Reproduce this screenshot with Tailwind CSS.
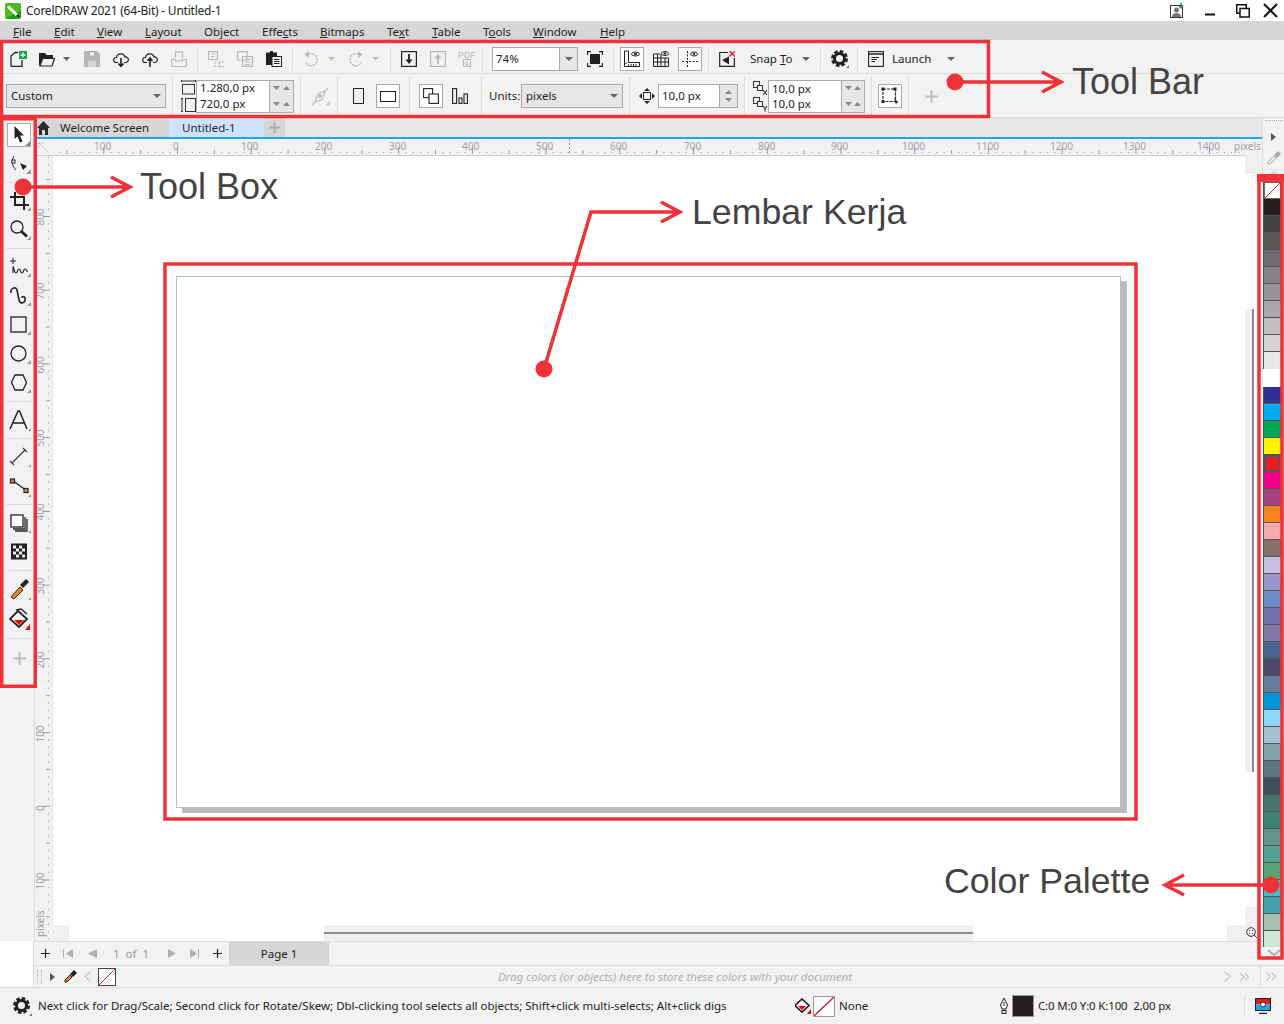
<!DOCTYPE html>
<html lang="en">
<head>
<meta charset="UTF-8">
<title>CorelDRAW 2021</title>
<script src="https://cdn.jsdelivr.net/npm/@tailwindcss/browser@4"></script>
</head>
<body class="relative w-[1284px] h-[1024px] overflow-hidden bg-white font-['Noto_Sans',sans-serif] text-[11.5px] leading-none text-[#222]">

<!-- Title bar -->
<div class="flex items-center h-[21px] pl-[5px] bg-white">
  <svg width="16" height="16" viewBox="0 0 16 16"><rect width="16" height="16" rx="2.5" fill="#19a01a"/><path d="M0 0H16V7L0 16Z" fill="#7fd02c" opacity=".55"/><path d="M3 3.5L12 12" stroke="#fff" stroke-width="3"/><path d="M12 12L14 14" stroke="#111" stroke-width="1.5"/></svg>
  <span class="ml-[5px] text-[12px] tracking-[-0.23px]">CorelDRAW 2021 (64-Bit) - Untitled-1</span>
  <div class="ml-auto flex items-center pr-[6px]">
    <svg width="16" height="16" viewBox="0 0 16 16" fill="none" stroke="#333"><rect x="1.5" y="2.5" width="12" height="12"/><circle cx="7.500" cy="7" r="2.500" fill="#777" stroke="none"/><path d="M3 14c0-3 2-4 4.500-4s4.500 1 4.500 4" fill="#777" stroke="none"/><path d="M12 0v5M10 3l2 2 2-2" stroke="#2a9d2a" stroke-width="1.500"/></svg>
    <svg class="ml-[20px]" width="10" height="10" viewBox="0 0 10 10"><path d="M0 8.500H10" stroke="#111" stroke-width="2"/></svg>
    <svg class="ml-[21px]" width="14" height="14" viewBox="0 0 14 14" fill="#fff" stroke="#111" stroke-width="1.500"><rect x=".75" y=".75" width="9.500" height="8.500"/><rect x="4" y="4.500" width="9.250" height="8.500"/></svg>
    <svg class="ml-[13px]" width="15" height="15" viewBox="0 0 15 15"><path d="M1 1L14 14M14 1L1 14" stroke="#111" stroke-width="2"/></svg>
  </div>
</div>

<!-- Menu bar -->
<div class="flex items-center h-[19px] pl-[13px] bg-[#d6d6d6] pt-[3px]">
  <span class="w-[41px]"><u>F</u>ile</span><span class="w-[43px]"><u>E</u>dit</span><span class="w-[48px]"><u>V</u>iew</span><span class="w-[59px]"><u>L</u>ayout</span><span class="w-[58px]">Ob<u>j</u>ect</span><span class="w-[58px]">Effe<u>c</u>ts</span><span class="w-[67px]"><u>B</u>itmaps</span><span class="w-[45px]">Te<u>x</u>t</span><span class="w-[51px]"><u>T</u>able</span><span class="w-[50px]">T<u>o</u>ols</span><span class="w-[67px]"><u>W</u>indow</span><span><u>H</u>elp</span>
</div>

<!-- Toolbar row 1 -->
<div class="flex items-center h-[34px] pt-[4px] bg-[#f2f2f2] border-b border-[#dcdcdc]">
  <svg class="ml-[10px]" width="17" height="16" viewBox="0 0 17 16" fill="none" stroke="#222" stroke-width="1.300"><path d="M1 15.500V5L5 1.500H8M12 9V15.500H1"/><rect x="9" y="0" width="8" height="8" fill="#12a24b" stroke="none"/><path d="M13 1.500V6.500M10.500 4H15.500" stroke="#fff"/></svg>
  <svg class="ml-[12px]" width="16" height="16" viewBox="0 0 16 16" fill="#222"><path d="M0 2H6L7.500 4H14V7H3.500L1.500 14H0Z"/><path d="M3.800 7.500H15.500L13 15H.8Z" fill="#f2f2f2" stroke="#222" stroke-width="1.200"/></svg>
  <svg class="ml-[8px]" width="7" height="4" viewBox="0 0 7 4"><path d="M0 0H7L3.500 4Z" fill="#666"/></svg>
  <svg class="ml-[14px]" width="16" height="16" viewBox="0 0 16 16"><path d="M0 0H13L16 3V16H0Z" fill="#b4b4b4"/><rect x="6" y="1.500" width="4" height="3" fill="#f2f2f2"/><rect x="4" y="10" width="8" height="6" fill="#d4d4d4"/></svg>
  <svg class="ml-[13px]" width="16" height="16" viewBox="0 0 16 16" fill="none" stroke="#222" stroke-width="1.200"><path d="M5 11.500H3.500C-.5 11.500 0 6.500 3.500 6.500 4 2 11 1.500 12 6 16 5.500 17 11.500 12 11.500H11"/><path d="M8 7V15M5.500 12.500L8 15.500 10.500 12.500" stroke-width="1.600"/></svg>
  <svg class="ml-[13px]" width="16" height="16" viewBox="0 0 16 16" fill="none" stroke="#222" stroke-width="1.200"><path d="M5 11.500H3.500C-.5 11.500 0 6.500 3.500 6.500 4 2 11 1.500 12 6 16 5.500 17 11.500 12 11.500H11"/><path d="M8 16V7.500M5.500 10L8 7 10.500 10" stroke-width="1.600"/></svg>
  <svg class="ml-[13px]" width="16" height="16" viewBox="0 0 16 16" fill="none" stroke="#b8b8b8" stroke-width="1.200"><path d="M4.500 7V.8H11.500V7M.6 15.500V8.500H4.500V10H11.500V8.500H15.400V15.500Z"/></svg>
  <div class="ml-[10px] w-px h-[24px] bg-[#dcdcdc]"></div>
  <svg class="ml-[10px]" width="16" height="16" viewBox="0 0 16 16" fill="none" stroke="#b8b8b8" stroke-width="1.200"><path d="M.6 .6H9.500V8.500H.6ZM3 3H7M3 5.500H7"/><path d="M11 11H16M11 15.500H16M11 11V15.500M7 11V15.500H9" stroke-dasharray="2 1"/></svg>
  <svg class="ml-[13px]" width="16" height="16" viewBox="0 0 16 16" fill="none" stroke="#b8b8b8" stroke-width="1.200"><path d="M.6 .6H10V9H.6ZM5.600 5.500H15.400V15.400H5.600ZM8 8.500H13M8 11H13M8 13.500H13"/></svg>
  <svg class="ml-[13px]" width="16" height="16" viewBox="0 0 16 16"><path d="M0 1.500H4V0H7V1.500H11V14H0Z" fill="#222"/><rect x="6" y="5.500" width="9.500" height="10" fill="#f2f2f2" stroke="#222"/><path d="M8 8.500H13.500M8 10.500H13.500M8 12.500H13.500" stroke="#222"/></svg>
  <div class="ml-[10px] w-px h-[24px] bg-[#dcdcdc]"></div>
  <svg class="ml-[10px]" width="16" height="16" viewBox="0 0 16 16" fill="none" stroke="#bcbcbc" stroke-width="1.400"><path d="M5 3.500A6 6 0 1 1 2.500 11" stroke-dasharray="2.500 1"/><path d="M6 0V7L1.500 3.500Z" fill="#bcbcbc" stroke="none"/></svg>
  <svg class="ml-[9px]" width="7" height="4" viewBox="0 0 7 4"><path d="M0 0H7L3.500 4Z" fill="#c0c0c0"/></svg>
  <svg class="ml-[13px]" width="16" height="16" viewBox="0 0 16 16" fill="none" stroke="#bcbcbc" stroke-width="1.400"><path d="M11 3.500A6 6 0 1 0 13.500 11" stroke-dasharray="2.500 1"/><path d="M10 0V7L14.500 3.500Z" fill="#bcbcbc" stroke="none"/></svg>
  <svg class="ml-[8px]" width="7" height="4" viewBox="0 0 7 4"><path d="M0 0H7L3.500 4Z" fill="#c0c0c0"/></svg>
  <div class="ml-[11px] w-px h-[24px] bg-[#dcdcdc]"></div>
  <svg class="ml-[10px]" width="16" height="16" viewBox="0 0 16 16"><rect x=".6" y=".6" width="14.800" height="14.800" fill="none" stroke="#222" stroke-width="1.200"/><path d="M8 3V9" stroke="#222" stroke-width="1.800"/><path d="M4.500 8.500H11.500L8 13Z" fill="#222"/></svg>
  <svg class="ml-[13px]" width="16" height="16" viewBox="0 0 16 16"><rect x=".6" y=".6" width="14.800" height="14.800" fill="none" stroke="#b8b8b8" stroke-width="1.200"/><path d="M8 13V7" stroke="#b8b8b8" stroke-width="1.800"/><path d="M4.500 7.500H11.500L8 3Z" fill="#b8b8b8"/></svg>
  <div class="ml-[13px] w-[16px] h-[16px] flex flex-col items-center text-[#b8b8b8]"><span class="text-[9px] leading-[8px] font-['Liberation_Sans',sans-serif]">PDF</span><svg width="8" height="8" viewBox="0 0 8 8" fill="none" stroke="#b8b8b8"><rect x=".5" y=".5" width="7" height="7"/><path d="M4 1.500V6.500M2 4.500L4 6.500 6 4.500"/></svg></div>
  <div class="ml-[7px] w-px h-[24px] bg-[#dcdcdc]"></div>
  <div class="ml-[9px] flex w-[86px] h-[24px] border border-[#aaa] bg-white">
    <span class="flex-1 pl-[3px] self-center">74%</span>
    <span class="w-[18px] bg-[#e6e6e6] border-l border-[#aaa] flex items-center justify-center"><svg width="8" height="4" viewBox="0 0 8 4"><path d="M0 0H8L4 4Z" fill="#666"/></svg></span>
  </div>
  <svg class="ml-[9px]" width="16" height="16" viewBox="0 0 16 16"><rect x="3" y="3" width="10" height="10" fill="#222"/><path d="M.6 4V.6H4M12 .6H15.400V4M15.400 12V15.400H12M4 15.400H.6V12" fill="none" stroke="#222" stroke-width="1.200"/></svg>
  <div class="ml-[10px] w-px h-[24px] bg-[#dcdcdc]"></div>
  <div class="ml-[6px] w-[24px] h-[24px] bg-white border border-[#aaa] flex items-center justify-center"><svg width="18" height="18" viewBox="0 0 18 18" fill="none" stroke="#222"><path d="M1.500 1V16.500H16.500V12.500H5.500V1ZM3 12.500V14M5.500 14.500V16M8 14V16M10.500 14V16M13 14V16" /><ellipse cx="12.500" cy="4" rx="4" ry="2" /><circle cx="12.500" cy="4" r="1" fill="#222"/></svg></div>
  <svg class="ml-[9px]" width="16" height="16" viewBox="0 0 16 16" fill="none" stroke="#222"><path d="M.5 3V15.500H15.500V7H.5M.5 11H15.500M4.500 3V15.500M8 3V15.500M12 7V15.500M.5 3H7"/><ellipse cx="12" cy="2.500" rx="3.500" ry="2"/><circle cx="12" cy="2.500" r=".8" fill="#222"/></svg>
  <div class="ml-[9px] w-[24px] h-[24px] bg-white border border-[#aaa] flex items-center justify-center"><svg width="18" height="18" viewBox="0 0 18 18" fill="none" stroke="#222"><path d="M6.500 1V17M1 11.500H17" stroke-dasharray="2 1.500"/><ellipse cx="13" cy="4" rx="3.500" ry="2"/><circle cx="13" cy="4" r=".8" fill="#222"/></svg></div>
  <div class="ml-[6px] w-px h-[24px] bg-[#dcdcdc]"></div>
  <svg class="ml-[10px]" width="16" height="16" viewBox="0 0 16 16"><path d="M9 1.500H.7V15.400H15.400V7" fill="none" stroke="#222" stroke-width="1.200"/><path d="M3 9L10 5.500V13.500Z" fill="#222"/><path d="M10.500 0L16 5.500M16 0L10.500 5.500" stroke="#ee1c25" stroke-width="1.400"/></svg>
  <span class="ml-[15px] w-[41px] whitespace-nowrap">Snap <u>T</u>o</span>
  <svg class="ml-[11px]" width="8" height="4" viewBox="0 0 8 4"><path d="M0 0H8L4 4Z" fill="#666"/></svg>
  <div class="ml-[10px] w-px h-[24px] bg-[#dcdcdc]"></div>
  <svg class="ml-[10px]" width="18" height="18" viewBox="0 0 18 18" fill="none" stroke="#222"><circle cx="8.500" cy="8.500" r="5" stroke-width="3"/><circle cx="8.500" cy="8.500" r="7" stroke-width="3" stroke-dasharray="3.500 2"/><path d="M15 18H18V15Z" fill="#777" stroke="none"/></svg>
  <div class="ml-[8px] w-px h-[24px] bg-[#dcdcdc]"></div>
  <svg class="ml-[10px]" width="16" height="16" viewBox="0 0 16 16" fill="none" stroke="#222" stroke-width="1.100"><rect x=".6" y=".6" width="14.800" height="14.800"/><path d="M.6 3H15.400" stroke-width="1.500"/><path d="M3.500 6.500H11M3.500 8.500H9M3.500 10.500H7"/></svg>
  <span class="ml-[8px] w-[39px]">Launch</span>
  <svg class="ml-[16px]" width="8" height="4" viewBox="0 0 8 4"><path d="M0 0H8L4 4Z" fill="#666"/></svg>
</div>

<!-- Toolbar row 2 -->
<div class="flex items-center h-[44px] pt-[1px] bg-[#f2f2f2] border-b border-[#dcdcdc]">
  <div class="ml-[6px] flex items-center justify-between w-[160px] h-[24px] px-[4px] bg-[#e6e6e6] border border-[#aaa]"><span>Custom</span><svg width="8" height="4" viewBox="0 0 8 4"><path d="M0 0H8L4 4Z" fill="#666"/></svg></div>
  <div class="ml-[6px] w-px h-[40px] bg-[#dcdcdc]"></div>
  <div class="ml-[8px] flex flex-col gap-[3px]">
    <svg width="15" height="15" viewBox="0 0 15 15" fill="none" stroke="#333"><path d="M.5 1H14.500M.5 0V2M14.500 0V2"/><rect x="1.500" y="4.500" width="12" height="9.500"/></svg>
    <svg width="15" height="14" viewBox="0 0 15 14" fill="none" stroke="#333"><path d="M1 .5V13.500M0 .5H2M0 13.500H2"/><rect x="4.500" y=".5" width="10" height="13"/></svg>
  </div>
  <div class="ml-[0px] grid grid-cols-[72px_24px] grid-rows-2 w-[98px] h-[33px] border border-[#aaa] bg-white">
    <span class="pl-[3px] self-center border-b border-transparent">1.280,0 px</span>
    <span class="bg-[#e6e6e6] border-l border-[#aaa] flex items-center justify-around px-[2px]"><svg width="7" height="4"><path d="M0 0H7L3.500 4Z" fill="#888"/></svg><svg width="7" height="4"><path d="M0 4H7L3.500 0Z" fill="#888"/></svg></span>
    <span class="pl-[3px] self-center">720,0 px</span>
    <span class="bg-[#e6e6e6] border-l border-[#aaa] flex items-center justify-around px-[2px]"><svg width="7" height="4"><path d="M0 0H7L3.500 4Z" fill="#888"/></svg><svg width="7" height="4"><path d="M0 4H7L3.500 0Z" fill="#888"/></svg></span>
  </div>
  <div class="ml-[6px] w-px h-[40px] bg-[#dcdcdc]"></div>
  <svg class="ml-[10px]" width="19" height="19" viewBox="0 0 19 19" fill="none" stroke="#c0c0c0" stroke-width="1.200"><path d="M4 15L7 6.500 14 4 11.500 12.500ZM1 18L4 15M14 4L17 1"/><circle cx="9" cy="9" r="1.500" fill="#c0c0c0"/><path d="M15 18H19V14Z" fill="#c8c8c8" stroke="none"/></svg>
  <div class="ml-[7px] w-px h-[40px] bg-[#dcdcdc]"></div>
  <div class="ml-[15px] w-[11px] h-[16px] border border-[#222]"></div>
  <div class="ml-[12px] w-[24px] h-[24px] bg-white border border-[#aaa] flex items-center justify-center"><div class="w-[16px] h-[11px] border border-[#222]"></div></div>
  <div class="ml-[9px] w-px h-[40px] bg-[#dcdcdc]"></div>
  <div class="ml-[9px] w-[24px] h-[24px] bg-white border border-[#aaa] flex items-center justify-center"><svg width="16" height="16" viewBox="0 0 16 16" fill="none" stroke="#222" stroke-width="1.100"><rect x=".6" y=".6" width="9" height="9"/><rect x="6" y="6" width="9.400" height="9.400" fill="#fff"/></svg></div>
  <svg class="ml-[9px]" width="16" height="16" viewBox="0 0 16 16" fill="none" stroke="#222" stroke-width="1.100"><rect x=".6" y=".6" width="4" height="14.800"/><rect x="7" y="10" width="3" height="5.400"/><rect x="12" y="6" width="3.400" height="9.400"/></svg>
  <div class="ml-[13px] w-px h-[40px] bg-[#dcdcdc]"></div>
  <span class="ml-[7px] w-[31px]">Units:</span>
  <div class="ml-[1px] flex items-center justify-between w-[102px] h-[24px] px-[4px] bg-[#e6e6e6] border border-[#aaa]"><span>pixels</span><svg width="8" height="4" viewBox="0 0 8 4"><path d="M0 0H8L4 4Z" fill="#666"/></svg></div>
  <div class="ml-[6px] w-px h-[40px] bg-[#dcdcdc]"></div>
  <svg class="ml-[9px]" width="16" height="16" viewBox="0 0 16 16"><rect x="4.500" y="4.500" width="7" height="7" fill="none" stroke="#222"/><path d="M8 0L11 3H5ZM8 16L5 13H11ZM0 8L3 5V11ZM16 8L13 11V5Z" fill="#222"/></svg>
  <div class="ml-[3px] flex w-[80px] h-[24px] border border-[#aaa] bg-white">
    <span class="flex-1 pl-[3px] self-center">10,0 px</span>
    <span class="w-[18px] bg-[#e6e6e6] border-l border-[#aaa] flex flex-col items-center justify-around py-[3px]"><svg width="7" height="4"><path d="M0 4H7L3.500 0Z" fill="#888"/></svg><svg width="7" height="4"><path d="M0 0H7L3.500 4Z" fill="#888"/></svg></span>
  </div>
  <div class="ml-[6px] w-px h-[40px] bg-[#dcdcdc]"></div>
  <div class="ml-[8px] flex flex-col gap-[1px]">
    <svg width="15" height="15" viewBox="0 0 15 15" fill="none" stroke="#333"><rect x=".5" y=".5" width="6" height="6"/><rect x="4.500" y="4.500" width="5" height="5" fill="#f2f2f2"/><path d="M10 9L14 14M14 9L10 14" stroke-width="1.100"/></svg>
    <svg width="15" height="15" viewBox="0 0 15 15" fill="none" stroke="#333"><rect x=".5" y=".5" width="6" height="6"/><rect x="4.500" y="4.500" width="5" height="5" fill="#f2f2f2"/><path d="M10 9L12 11.500 14 9M12 11.500V14.500" stroke-width="1.100"/></svg>
  </div>
  <div class="ml-[0px] grid grid-cols-[72px_23px] grid-rows-2 w-[97px] h-[33px] border border-[#aaa] bg-white">
    <span class="pl-[3px] self-center">10,0 px</span>
    <span class="bg-[#e6e6e6] border-l border-[#aaa] flex items-center justify-around px-[2px]"><svg width="7" height="4"><path d="M0 0H7L3.500 4Z" fill="#888"/></svg><svg width="7" height="4"><path d="M0 4H7L3.500 0Z" fill="#888"/></svg></span>
    <span class="pl-[3px] self-center">10,0 px</span>
    <span class="bg-[#e6e6e6] border-l border-[#aaa] flex items-center justify-around px-[2px]"><svg width="7" height="4"><path d="M0 0H7L3.500 4Z" fill="#888"/></svg><svg width="7" height="4"><path d="M0 4H7L3.500 0Z" fill="#888"/></svg></span>
  </div>
  <div class="ml-[6px] w-px h-[40px] bg-[#dcdcdc]"></div>
  <div class="ml-[6px] w-[24px] h-[24px] bg-white border border-[#aaa] flex items-center justify-center"><svg width="18" height="18" viewBox="0 0 18 18" fill="none" stroke="#222" stroke-width="1.200"><rect x="2" y="2" width="12.500" height="12.500" stroke-dasharray="3 1"/><rect x=".5" y=".5" width="3" height="3" fill="#222" stroke="none"/><rect x="12.500" y=".5" width="3" height="3" fill="#222" stroke="none"/><rect x=".5" y="13" width="3" height="3" fill="#222" stroke="none"/><path d="M13 11L17.500 15.500 15.500 16 15 18Z" fill="#222" stroke="none"/></svg></div>
  <div class="ml-[6px] w-px h-[40px] bg-[#dcdcdc]"></div>
  <svg class="ml-[16px]" width="13" height="13" viewBox="0 0 13 13"><path d="M6.500 0V13M0 6.500H13" stroke="#bdbdbd" stroke-width="2"/></svg>
</div>

<!-- Main area -->
<div class="flex h-[823px] bg-[#f2f2f2]">
  <!-- Tool box -->
  <div class="w-[35px] shrink-0 border-r border-[#dcdcdc] pl-[4px] pt-[2px] flex flex-col items-center">
    <div class="h-[29px] flex items-center"><div class="relative w-[24px] h-[24px] bg-white border border-[#aaa] flex items-center justify-center"><svg width="12" height="17" viewBox="0 0 12 17"><path d="M1.500 0V13L4.500 10.500 7 16.500 9.500 15.500 7 9.500H11Z" fill="#222"/></svg><span class="absolute right-0 bottom-0 w-0 h-0 border-l-[5px] border-b-[5px] border-l-transparent border-b-[#888]"></span></div></div>
    <svg class="h-[29px]" width="24" height="29" viewBox="0 0 24 29" fill="none" stroke="#222"><path d="M7 7C4 12 5 17 9 21"/><rect x="5" y="11" width="3" height="3" fill="#fff"/><path d="M13 14L20 17 16 21Z" fill="#222" stroke="none"/><path d="M19 25H24V20Z" fill="#999" stroke="none"/></svg>
    <div class="w-[26px] h-[8px] flex items-center"><div class="w-full h-px bg-[#dcdcdc]"></div></div>
    <svg class="h-[29px]" width="24" height="29" viewBox="0 0 24 29" fill="none" stroke="#222" stroke-width="2"><path d="M8 6V19H22M3 11H17V24"/><path d="M20 25H24V21Z" fill="#999" stroke="none"/></svg>
    <svg class="h-[29px]" width="24" height="29" viewBox="0 0 24 29" fill="none" stroke="#222" stroke-width="1.300"><circle cx="10" cy="12" r="6"/><path d="M14.500 16.500L20 21.500" stroke-width="2.800"/><path d="M20 25H24V21Z" fill="#999" stroke="none"/></svg>
    <div class="w-[26px] h-[8px] flex items-center"><div class="w-full h-px bg-[#dcdcdc]"></div></div>
    <svg class="h-[29px]" width="24" height="29" viewBox="0 0 24 29" fill="none" stroke="#222"><path d="M6 6V12M3 9H9"/><path d="M6 21V15C7 14 7 21 9 21S10 17 12 17 13 21 15 21 16 17 18 17 19 20 21 19" stroke-width="1.100"/><path d="M20 25H24V21Z" fill="#999" stroke="none"/></svg>
    <svg class="h-[29px]" width="24" height="29" viewBox="0 0 24 29" fill="none" stroke="#222" stroke-width="1.600"><path d="M4 12C3 7 9 5 10 9L12 19C13 24 19 22 18 17 17.500 15 15 15 15 17"/><path d="M20 25H24V21Z" fill="#999" stroke="none"/></svg>
    <svg class="h-[29px]" width="24" height="29" viewBox="0 0 24 29" fill="none" stroke="#222" stroke-width="1.300"><rect x="4" y="7" width="15" height="15"/><path d="M20 25H24V21Z" fill="#999" stroke="none"/></svg>
    <svg class="h-[29px]" width="24" height="29" viewBox="0 0 24 29" fill="none" stroke="#222" stroke-width="1.300"><circle cx="11.500" cy="14.500" r="7.500"/><path d="M20 25H24V21Z" fill="#999" stroke="none"/></svg>
    <svg class="h-[29px]" width="24" height="29" viewBox="0 0 24 29" fill="none" stroke="#222" stroke-width="1.300"><path d="M8 7H16L19.500 14.500 16 22H8L4.500 14.500Z"/><path d="M20 25H24V21Z" fill="#999" stroke="none"/></svg>
    <div class="w-[26px] h-[9px] flex items-center"><div class="w-full h-px bg-[#dcdcdc]"></div></div>
    <svg class="h-[29px]" width="24" height="29" viewBox="0 0 24 29" fill="none" stroke="#222" stroke-width="1.500"><path d="M3 23L11 5H12.500L20 23M6 17H17"/><path d="M21 25H25V21Z" fill="#999" stroke="none"/></svg>
    <div class="w-[26px] h-[7px] flex items-center"><div class="w-full h-px bg-[#dcdcdc]"></div></div>
    <svg class="h-[29px]" width="24" height="29" viewBox="0 0 24 29" fill="none" stroke="#333" stroke-width="1.100"><path d="M5 21L18 8M3 19L7 23M16 6L20 10"/><path d="M21 25H25V21Z" fill="#999" stroke="none"/></svg>
    <svg class="h-[30px]" width="24" height="30" viewBox="0 0 24 30" fill="none" stroke="#222" stroke-width="1.200"><path d="M7 10.500L18 18.500"/><rect x="3.500" y="8" width="4" height="4" fill="#f57f20" stroke="#222"/><rect x="17" y="17.500" width="4" height="4" fill="#f57f20" stroke="#222"/><path d="M21 26H25V22Z" fill="#999" stroke="none"/></svg>
    <div class="w-[26px] h-[7px] flex items-center"><div class="w-full h-px bg-[#dcdcdc]"></div></div>
    <svg class="h-[29px]" width="24" height="29" viewBox="0 0 24 29" fill="none" stroke="#222" stroke-width="1.300"><rect x="4" y="7" width="12" height="12" fill="#fff"/><path d="M18 9V21H6M20 11V23H8"/><path d="M21 25H25V21Z" fill="#999" stroke="none"/></svg>
    <svg class="h-[29px]" width="16" height="16" viewBox="0 0 16 16"><rect width="16" height="16" fill="#222"/><path d="M2 2h3v3H2zM8 2h3v3H8zM5 5h3v3H5zM11 5h3v3h-3zM2 8h3v3H2zM8 8h3v3H8zM5 11h3v3H5zM11 11h3v3h-3z" fill="#eee"/></svg>
    <div class="w-[26px] h-[8px] flex items-center"><div class="w-full h-px bg-[#dcdcdc]"></div></div>
    <svg class="h-[29px]" width="24" height="29" viewBox="0 0 24 29" fill="none"><path d="M4 23L13 13 16 16 7 25Z" fill="#f57f20" stroke="#222"/><path d="M13 11L19 5 22 8 16 14Z" fill="#222"/><path d="M21 26H25V22Z" fill="#999"/></svg>
    <svg class="h-[30px]" width="24" height="30" viewBox="0 0 24 30"><path d="M11 8L20 16 12 24 3 16Z" fill="#fff" stroke="#222" stroke-width="1.800"/><path d="M7 17H17L12 22Z" fill="#e00"/><path d="M9 7L14 6 20 11" fill="none" stroke="#222" stroke-width="1.500"/><path d="M18 27H23V21Z" fill="#e00"/></svg>
    <div class="w-[26px] h-[11px] flex items-center"><div class="w-full h-px bg-[#dcdcdc]"></div></div>
    <svg class="mt-[8px]" width="13" height="13" viewBox="0 0 13 13"><path d="M6.500 0V13M0 6.500H13" stroke="#bdbdbd" stroke-width="2"/></svg>
  </div>

  <!-- Document area -->
  <div class="flex-1 flex flex-col min-w-0">
    <!-- Tabs -->
    <div class="flex h-[21px] bg-[#e6e6e6] border-b-2 border-[#1aa9ef] shrink-0">
      <div class="flex items-center w-[134px] bg-[#d6d6d6] pl-[2px]"><svg width="13" height="14" viewBox="0 0 13 14"><path d="M6.500 0L13 7H11V14H8V9H5V14H2V7H0Z" fill="#2a2a2a"/></svg><span class="ml-[10px]">Welcome Screen</span></div>
      <div class="flex items-center w-[95px] bg-[#cce4ff] pl-[13px]">Untitled-1</div>
      <div class="flex items-center justify-center w-[21px] bg-[#d6d6d6]"><svg width="11" height="11" viewBox="0 0 11 11"><path d="M5.500 0V11M0 5.500H11" stroke="#aaa" stroke-width="2"/></svg></div>
    </div>
    <!-- Horizontal ruler -->
    <div class="relative h-[17px] shrink-0 border-b border-[#d0d0d0] text-[10px] text-[#9aa0a6]">
      <svg class="absolute left-0 top-0" width="1227" height="16"><defs><pattern id="rh" x="142" y="0" width="73.720" height="16" patternUnits="userSpaceOnUse"><rect x="0" y="8" width="1" height="7" fill="#999"/><rect x="36.860" y="11" width="1" height="4" fill="#999"/><rect x="7.370" y="13" width="1" height="1" fill="#888"/><rect x="14.740" y="13" width="1" height="1" fill="#888"/><rect x="22.110" y="13" width="1" height="1" fill="#888"/><rect x="29.480" y="13" width="1" height="1" fill="#888"/><rect x="44.230" y="13" width="1" height="1" fill="#888"/><rect x="51.600" y="13" width="1" height="1" fill="#888"/><rect x="58.970" y="13" width="1" height="1" fill="#888"/><rect x="66.340" y="13" width="1" height="1" fill="#888"/></pattern></defs><rect x="18" width="1190" height="16" fill="url(#rh)"/><path d="M534.500 0V16" stroke="#888" stroke-dasharray="2 2"/><path d="M4 4L12 12M4 4H10M4 4V10" stroke="#aaa" stroke-dasharray="1 1" fill="none"/></svg>
      <div class="absolute left-[-1px] top-0">
        <span class="absolute left-[60px] top-[2px]">100</span><span class="absolute left-[139px] top-[2px]">0</span><span class="absolute left-[207px] top-[2px]">100</span><span class="absolute left-[281px] top-[2px]">200</span><span class="absolute left-[355px] top-[2px]">300</span><span class="absolute left-[428px] top-[2px]">400</span><span class="absolute left-[502px] top-[2px]">500</span><span class="absolute left-[576px] top-[2px]">600</span><span class="absolute left-[650px] top-[2px]">700</span><span class="absolute left-[724px] top-[2px]">800</span><span class="absolute left-[797px] top-[2px]">900</span><span class="absolute left-[868px] top-[2px]">1000</span><span class="absolute left-[942px] top-[2px]">1100</span><span class="absolute left-[1016px] top-[2px]">1200</span><span class="absolute left-[1089px] top-[2px]">1300</span><span class="absolute left-[1163px] top-[2px]">1400</span><span class="absolute left-[1200px] top-[2px]">pixels</span>
      </div>
    </div>
    <!-- Canvas row -->
    <div class="flex flex-1 min-h-0">
      <div class="relative w-[17px] shrink-0 text-[10px] text-[#9aa0a6]">
        <svg class="absolute left-0 top-0" width="17" height="785"><defs><pattern id="rv" x="0" y="60" width="17" height="73.720" patternUnits="userSpaceOnUse"><rect x="8" y="0" width="7" height="1" fill="#999"/><rect x="11" y="36.860" width="4" height="1" fill="#999"/><rect x="13" y="7.370" width="1" height="1" fill="#888"/><rect x="13" y="14.740" width="1" height="1" fill="#888"/><rect x="13" y="22.110" width="1" height="1" fill="#888"/><rect x="13" y="29.480" width="1" height="1" fill="#888"/><rect x="13" y="44.230" width="1" height="1" fill="#888"/><rect x="13" y="51.600" width="1" height="1" fill="#888"/><rect x="13" y="58.970" width="1" height="1" fill="#888"/><rect x="13" y="66.340" width="1" height="1" fill="#888"/></pattern></defs><rect width="17" height="785" fill="url(#rv)"/></svg>
        <span class="absolute left-[-7px] top-[56px] w-[24px] text-center -rotate-90">800</span><span class="absolute left-[-7px] top-[130px] w-[24px] text-center -rotate-90">700</span><span class="absolute left-[-7px] top-[204px] w-[24px] text-center -rotate-90">600</span><span class="absolute left-[-7px] top-[277px] w-[24px] text-center -rotate-90">500</span><span class="absolute left-[-7px] top-[351px] w-[24px] text-center -rotate-90">400</span><span class="absolute left-[-7px] top-[425px] w-[24px] text-center -rotate-90">300</span><span class="absolute left-[-7px] top-[499px] w-[24px] text-center -rotate-90">200</span><span class="absolute left-[-7px] top-[573px] w-[24px] text-center -rotate-90">100</span><span class="absolute left-[-7px] top-[647px] w-[24px] text-center -rotate-90">0</span><span class="absolute left-[-7px] top-[720px] w-[24px] text-center -rotate-90">100</span><span class="absolute left-[-7px] top-[764px] w-[24px] text-center -rotate-90">pixels</span>
      </div>
      <div class="relative flex-1 bg-white border-l border-[#e4e4e4] min-w-0">
        <div class="ml-[123px] mt-[120px] w-[945px] h-[532px] bg-white border border-[#bdbdbd] shadow-[6px_5px_0_#bdbdbd]"></div>
        <!-- scroll bars -->
        <div class="absolute left-[1192px] top-[153px] w-[9px] h-[463px] bg-[#f0f0f0] border-r-2 border-[#8a8a8a]"></div>
        <div class="absolute left-[1192px] top-[-1px] w-[17px] h-[19px] bg-[#f0f0f0]"></div>
        <div class="absolute left-[271px] bottom-0 w-[649px] h-[16px] bg-[#f0f0f0] pt-[7px]"><div class="h-[2px] bg-[#8a8a8a]"></div></div>
        <div class="absolute left-[-1px] bottom-0 w-[17px] h-[16px] bg-[#f0f0f0]"></div>
        <div class="absolute left-[1174px] bottom-0 w-[18px] h-[16px] bg-[#f0f0f0]"></div>
        <div class="absolute left-[1192px] bottom-0 w-[12px] h-[34px] bg-[#f0f0f0]"></div>
        <svg class="absolute left-[1193px] bottom-[3px]" width="11" height="11" viewBox="0 0 11 11" fill="none" stroke="#333"><circle cx="5" cy="5" r="4.300"/><path d="M8 8L11 11M3 3.500H4M6 3.500H7M3 6.500H4M6 6.500H7"/></svg>
      </div>
    </div>
  </div>

  <!-- Right docker -->
  <div class="relative z-10 w-[22px] shrink-0 bg-[#f2f2f2] border-l border-[#e0e0e0] flex flex-col items-center">
    <div class="shrink-0 w-[18px] h-[5px] mt-[2px] border-t border-dotted border-[#aaa]"></div>
    <svg class="shrink-0 mt-[8px]" width="5" height="8" viewBox="0 0 5 8"><path d="M0 0L5 4 0 8Z" fill="#555"/></svg>
    <svg class="shrink-0 mt-[10px]" width="14" height="14" viewBox="0 0 14 14"><path d="M1 13V11L7 5 9 7 3 13Z" fill="none" stroke="#aaa"/><path d="M7 4L11 0 14 3 10 7Z" fill="#aaa"/></svg>
    <svg class="shrink-0 mt-[6px]" width="14" height="6" viewBox="0 0 14 6"><path d="M1 6L7 1 13 6" fill="none" stroke="#d0d0d0" stroke-width="2"/></svg>
    <!-- Colour palette -->
    <div class="shrink-0 mt-[5px] self-start w-[18px] border-l border-[#555] flex flex-col">
      <div class="shrink-0 h-[17px] bg-white border border-[#666] flex items-center justify-center"><svg width="15" height="15"><path d="M0 15L15 0" stroke="#ed1c24"/></svg></div>
      <div class="shrink-0 h-[17px] border-b border-[#555] bg-[#231f20]"></div><div class="shrink-0 h-[17px] border-b border-[#555] bg-[#414042]"></div><div class="shrink-0 h-[17px] border-b border-[#555] bg-[#58595b]"></div><div class="shrink-0 h-[17px] border-b border-[#555] bg-[#6d6e71]"></div><div class="shrink-0 h-[17px] border-b border-[#555] bg-[#808285]"></div><div class="shrink-0 h-[17px] border-b border-[#555] bg-[#939598]"></div><div class="shrink-0 h-[17px] border-b border-[#555] bg-[#a7a9ac]"></div><div class="shrink-0 h-[17px] border-b border-[#555] bg-[#bcbec0]"></div><div class="shrink-0 h-[17px] border-b border-[#555] bg-[#d1d3d4]"></div><div class="shrink-0 h-[17px] bg-[#e6e7e8]"></div><div class="shrink-0 h-[18px] -ml-[1px] bg-white"></div><div class="shrink-0 h-[17px] border-b border-[#555] bg-[#2e3192]"></div><div class="shrink-0 h-[17px] border-b border-[#555] bg-[#00aeef]"></div><div class="shrink-0 h-[17px] border-b border-[#555] bg-[#00a651]"></div><div class="shrink-0 h-[17px] border-b border-[#555] bg-[#fff200]"></div><div class="shrink-0 h-[17px] border-2 border-[#555] bg-[#ed1c24]"></div><div class="shrink-0 h-[17px] border-b border-[#555] bg-[#ec008c]"></div><div class="shrink-0 h-[17px] border-b border-[#555] bg-[#a6437f]"></div><div class="shrink-0 h-[17px] border-b border-[#555] bg-[#f7841e]"></div><div class="shrink-0 h-[17px] border-b border-[#555] bg-[#f9a8ad]"></div><div class="shrink-0 h-[17px] border-b border-[#555] bg-[#85706a]"></div><div class="shrink-0 h-[17px] border-b border-[#555] bg-[#c4c1e0]"></div><div class="shrink-0 h-[17px] border-b border-[#555] bg-[#9a95c9]"></div><div class="shrink-0 h-[17px] border-b border-[#555] bg-[#6d8dc9]"></div><div class="shrink-0 h-[17px] border-b border-[#555] bg-[#7670ae]"></div><div class="shrink-0 h-[17px] border-b border-[#555] bg-[#8079a5]"></div><div class="shrink-0 h-[17px] border-b border-[#555] bg-[#4a6491]"></div><div class="shrink-0 h-[17px] border-b border-[#555] bg-[#4e4a6b]"></div><div class="shrink-0 h-[17px] border-b border-[#555] bg-[#677d99]"></div><div class="shrink-0 h-[17px] border-b border-[#555] bg-[#0095d9]"></div><div class="shrink-0 h-[17px] border-b border-[#555] bg-[#8dd7f7]"></div><div class="shrink-0 h-[17px] border-b border-[#555] bg-[#a3bfd1]"></div><div class="shrink-0 h-[17px] border-b border-[#555] bg-[#84a0ad]"></div><div class="shrink-0 h-[17px] border-b border-[#555] bg-[#5f7580]"></div><div class="shrink-0 h-[17px] border-b border-[#555] bg-[#40505a]"></div><div class="shrink-0 h-[17px] border-b border-[#555] bg-[#49736c]"></div><div class="shrink-0 h-[17px] border-b border-[#555] bg-[#3c8272]"></div><div class="shrink-0 h-[17px] border-b border-[#555] bg-[#649390]"></div><div class="shrink-0 h-[17px] border-b border-[#555] bg-[#4fa38f]"></div><div class="shrink-0 h-[17px] border-b border-[#555] bg-[#5aa374]"></div><div class="shrink-0 h-[17px] border-b border-[#555] bg-[#40bcc5]"></div><div class="shrink-0 h-[17px] border-b border-[#555] bg-[#45a0ad]"></div><div class="shrink-0 h-[17px] border-b border-[#555] bg-[#a8bfb0]"></div><div class="shrink-0 h-[16px] bg-[#cde5d6]"></div>
    </div>
    <svg class="shrink-0 mt-[2px]" width="14" height="7" viewBox="0 0 14 7"><path d="M1 1L7 6 13 1" fill="none" stroke="#b0b0b0" stroke-width="2"/></svg>
  </div>
</div>

<!-- Page navigator -->
<div class="flex items-center h-[24px] bg-[#f2f2f2] border-t border-[#dcdcdc] ml-[33px] border-l">
  <svg class="ml-[7px]" width="9" height="9" viewBox="0 0 9 9"><path d="M4.500 0V9M0 4.500H9" stroke="#222" stroke-width="1.200"/></svg>
  <svg class="ml-[13px]" width="10" height="9" viewBox="0 0 10 9"><path d="M.5 0V9" stroke="#b0b0b0"/><path d="M10 0V9L3 4.500Z" fill="#b0b0b0"/></svg>
  <svg class="ml-[15px]" width="9" height="9" viewBox="0 0 9 9"><path d="M9 0V9L0 4.500Z" fill="#b0b0b0"/></svg>
  <span class="ml-[16px] w-[36px] text-[#999] whitespace-pre">1  of  1</span>
  <svg class="ml-[19px]" width="8" height="9" viewBox="0 0 8 9"><path d="M0 0V9L8 4.500Z" fill="#b0b0b0"/></svg>
  <svg class="ml-[14px]" width="9" height="9" viewBox="0 0 9 9"><path d="M0 0V9L7 4.500Z" fill="#b0b0b0"/><path d="M8.500 0V9" stroke="#b0b0b0"/></svg>
  <svg class="ml-[14px]" width="9" height="9" viewBox="0 0 9 9"><path d="M4.500 0V9M0 4.500H9" stroke="#222" stroke-width="1.200"/></svg>
  <div class="ml-[7px] w-[100px] h-full bg-[#d6d6d6] flex items-center justify-center">Page 1</div>
</div>

<!-- Document palette -->
<div class="flex items-center h-[22px] bg-[#f2f2f2] border-t border-[#dcdcdc] ml-[33px] border-l">
  <div class="ml-[3px] w-[5px] h-[14px] border-x border-dotted border-[#aaa]"></div>
  <svg class="ml-[8px]" width="5" height="8" viewBox="0 0 5 8"><path d="M0 0L5 4 0 8Z" fill="#555"/></svg>
  <svg class="ml-[9px]" width="13" height="13" viewBox="0 0 13 13"><path d="M1 12V10L6 5 8 7 3 12Z" fill="#f57f20" stroke="#222"/><path d="M6 4L10 0 13 3 9 7Z" fill="#222"/></svg>
  <svg class="ml-[7px]" width="7" height="11" viewBox="0 0 7 11"><path d="M6.500 .5L1 5.500 6.500 10.500" fill="none" stroke="#ccc" stroke-width="1.500"/></svg>
  <div class="ml-[7px] w-[18px] h-[18px] bg-white border border-[#444] flex items-center justify-center"><svg width="16" height="16"><path d="M0 16L16 0" stroke="#ed1c24"/></svg></div>
  <span class="ml-[381px] w-[356px] text-center italic text-[#b0b0b0] whitespace-nowrap">Drag colors (or objects) here to store these colors with your document</span>
  <svg class="ml-[370px]" width="9" height="11" viewBox="0 0 9 11"><path d="M1 .5L7.500 5.500 1 10.500" fill="none" stroke="#ccc" stroke-width="1.500"/></svg>
  <svg class="ml-[8px]" width="9" height="8" viewBox="0 0 9 8"><path d="M.5 .5L4 4 .5 7.500M5 .5L8.500 4 5 7.500" fill="none" stroke="#aaa"/></svg>
  <div class="ml-[11px] w-px h-full bg-[#dcdcdc]"></div>
  <svg class="ml-[5px]" width="10" height="9" viewBox="0 0 10 9"><path d="M.5 .5L4.500 4.500 .5 8.500M5.500 .5L9.500 4.500 5.500 8.500" fill="none" stroke="#aaa"/></svg>
</div>

<!-- Status bar -->
<div class="absolute left-0 right-0 bottom-0 flex items-center h-[37px] bg-[#f2f2f2] border-t border-[#dcdcdc]">
  <svg class="ml-[13px]" width="19" height="19" viewBox="0 0 19 19" fill="none" stroke="#222"><circle cx="8.500" cy="8.500" r="5" stroke-width="3"/><circle cx="8.500" cy="8.500" r="7" stroke-width="3" stroke-dasharray="3.500 2"/><path d="M16 19H19V16Z" fill="#777" stroke="none"/></svg>
  <span class="ml-[6px] w-[757px] shrink-0 whitespace-nowrap">Next click for Drag/Scale; Second click for Rotate/Skew; Dbl-clicking tool selects all objects; Shift+click multi-selects; Alt+click digs</span>
  <svg class="shrink-0" width="16" height="16" viewBox="0 0 16 16"><path d="M7 1L14 7.500 7 14 0 7.500Z" fill="#fff" stroke="#222" stroke-width="1.700"/><path d="M3 8H11L7 12Z" fill="#e00"/><path d="M12 16H16V11Z" fill="#e00"/></svg>
  <div class="ml-[2px] w-[22px] h-[21px] bg-white border border-[#999] shrink-0 flex items-center justify-center"><svg width="20" height="19"><path d="M0 19L20 0" stroke="#d4161d" stroke-width="1.300"/></svg></div>
  <span class="ml-[4px] w-[161px] shrink-0">None</span>
  <svg class="shrink-0" width="8" height="16" viewBox="0 0 8 16" fill="none" stroke="#222"><path d="M4 0L7.500 7 6 11H2L.5 7Z"/><path d="M4 4V8"/><rect x="2" y="12.500" width="4" height="3"/></svg>
  <div class="ml-[4px] w-[22px] h-[22px] bg-[#231f20] border border-[#999] shrink-0"></div>
  <span class="ml-[4px] w-[206px] shrink-0 whitespace-pre tracking-[-0.15px]">C:0 M:0 Y:0 K:100  2,00 px</span>
  <div class="w-px h-[22px] bg-[#dcdcdc] shrink-0"></div>
  <svg class="ml-[10px] shrink-0" width="16" height="16" viewBox="0 0 16 16"><rect x=".5" y=".5" width="15" height="12" fill="#fff" stroke="#222"/><rect x="1" y="1" width="14" height="5.500" fill="#e21b22"/><rect x="1" y="6.500" width="14" height="5.500" fill="#1aa9ef"/><circle cx="8" cy="6.500" r="2.500" fill="#fff" stroke="#222"/><path d="M4 15.500H12" stroke="#222" stroke-width="1.500"/></svg>
</div>

<!-- Annotations -->
<svg class="absolute left-0 top-0 z-20 pointer-events-none" width="1284" height="1024" fill="none" stroke="#ee3238" stroke-width="3.500">
  <rect x="1.500" y="41.500" width="987" height="75"/>
  <rect x="1.750" y="118.750" width="33.500" height="567.500"/>
  <rect x="165" y="264" width="971" height="555"/>
  <rect x="1259" y="176" width="23" height="782"/>
  <g fill="#ee3238" stroke="none"><rect x="1257" y="174" width="27" height="8"/><circle cx="955" cy="82" r="8.500"/><circle cx="23" cy="187" r="8.500"/><circle cx="544" cy="369" r="8.500"/><circle cx="1271" cy="885" r="8.500"/></g>
  <path d="M955 82H1060M1042 72L1061 82 1042 92"/>
  <path d="M23 187H129M111 177L130 187 111 197"/>
  <path d="M544 369L591 212H679M661 202L680 212 661 222"/>
  <path d="M1271 885H1166M1184 875L1165 885 1184 895"/>
</svg>
<span class="absolute z-20 left-[1072px] top-[61px] text-[36px] leading-[42px] text-[#444] font-['Liberation_Sans',sans-serif]">Tool Bar</span>
<span class="absolute z-20 left-[140px] top-[166px] text-[36px] leading-[42px] text-[#444] font-['Liberation_Sans',sans-serif]">Tool Box</span>
<span class="absolute z-20 left-[692px] top-[191px] text-[35.7px] leading-[42px] text-[#444] font-['Liberation_Sans',sans-serif]">Lembar Kerja</span>
<span class="absolute z-20 left-[944px] top-[860px] text-[35.7px] leading-[42px] text-[#444] font-['Liberation_Sans',sans-serif]">Color Palette</span>
</body>
</html>
